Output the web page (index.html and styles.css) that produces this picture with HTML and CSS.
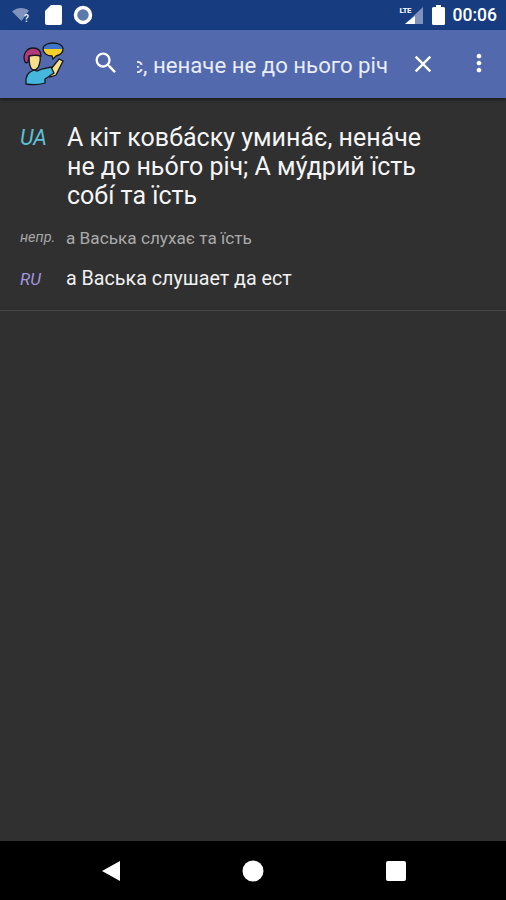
FILE: index.html
```html
<!DOCTYPE html>
<html lang="uk">
<head>
<meta charset="utf-8">
<title>Словник</title>
<link rel="stylesheet" href="styles.css">
</head>
<body>
<div class="phone">
  <div class="status">
    <div class="status-left">
      <svg class="ic-wifi" width="20" height="16" viewBox="0 0 20 16"><path d="M0 4.500C3 2 6 1 9 1s6 1 8 2.500L9.500 14z" fill="#7f93bd"/><text x="12" y="15" class="q">?</text></svg>
      <svg class="ic-sd" width="17" height="20" viewBox="0 0 17 20"><path d="M6 0h9a2 2 0 0 1 2 2v16a2 2 0 0 1-2 2H2a2 2 0 0 1-2-2V6z" fill="#fff"/></svg>
      <svg class="ic-rec" width="20" height="20" viewBox="0 0 20 20"><circle cx="10" cy="10" r="7.500" fill="#5d78ab" stroke="#fff" stroke-width="3.500"/></svg>
    </div>
    <div class="status-right">
      <span class="sig"><svg width="23" height="19" viewBox="0 0 23 19"><path d="M22 1v17H4z" fill="#7f93bd"/><path d="M14 10v8H4z" fill="#fff"/></svg><span class="lte">LTE</span></span>
      <svg class="ic-batt" width="13" height="20" viewBox="0 0 13 20"><path d="M4 0h5v2h2.500A1.500 1.500 0 0 1 13 3.500V18.500A1.500 1.500 0 0 1 11.500 20H1.500A1.500 1.500 0 0 1 0 18.500V3.500A1.500 1.500 0 0 1 1.500 2H4z" fill="#fff"/></svg>
      <span class="clock">00:06</span>
    </div>
  </div>
  <header class="appbar">
    <svg class="logo" width="46" height="48" viewBox="0 0 46 48">
      <path d="M30 29l8-10 4 2-7 14-6 2z" fill="#f6e08a" stroke="#16161c" stroke-width="1.300"/>
      <path d="M5 44c-1-7 2-12 8-14l3 1 5-2 9-2 3 6-9 6v4c-6 2-13 2-19 1z" fill="#45b6dc" stroke="#16161c" stroke-width="1.300"/>
      <path d="M8 15h11c1 6-1 15-6 15-4 0-5-8-5-15z" fill="#f6e08a" stroke="#16161c" stroke-width="1.300"/>
      <path d="M4 22C1 14 6 8 12 8c5 0 8 3 8 8-4-1-8-1-12 0l-1 6c-1 1-2 1-3 0z" fill="#b33a78" stroke="#16161c" stroke-width="1.300"/>
      <path d="M22 9c0-4 5-6 10-6s10 2 10 6H22z" fill="#3d74c8"/>
      <path d="M22 9h20c0 4-3 6-7 7l-3 3-1-3c-5 0-9-3-9-7z" fill="#f4cf2a"/>
      <path d="M22 9c0-4 5-6 10-6s10 2 10 6c0 4-3 6-7 7l-3 3-1-3c-5 0-9-3-9-7z" fill="none" stroke="#16161c" stroke-width="1.300"/>
    </svg>
    <svg class="search" width="28" height="28" viewBox="0 0 24 24"><path fill="#fff" d="M15.500 14h-.79l-.28-.27A6.470 6.470 0 0 0 16 9.500 6.500 6.500 0 1 0 9.500 16c1.610 0 3.090-.59 4.230-1.570l.27.28v.79l5 4.990L20.490 19l-4.990-5zm-6 0C7.010 14 5 11.990 5 9.500S7.010 5 9.500 5 14 7.010 14 9.500 11.990 14 9.500 14z"/></svg>
    <div class="query"><span>А кіт ковбаску уминає, неначе не до нього річ</span></div>
    <svg class="close" width="28" height="28" viewBox="0 0 24 24"><path fill="#fff" d="M19 6.410 17.590 5 12 10.590 6.410 5 5 6.410 10.590 12 5 17.590 6.410 19 12 13.410 17.590 19 19 17.590 13.410 12z"/></svg>
    <svg class="more" width="28" height="28" viewBox="0 0 24 24"><path fill="#fff" d="M12 8c1.100 0 2-.9 2-2s-.9-2-2-2-2 .9-2 2 .9 2 2 2zm0 2c-1.100 0-2 .9-2 2s.9 2 2 2 2-.9 2-2-.9-2-2-2zm0 6c-1.100 0-2 .9-2 2s.9 2 2 2 2-.9 2-2-.9-2-2-2z"/></svg>
  </header>
  <main class="content">
    <article class="entry">
      <div class="row row-main">
        <span class="tag tag-ua">UA</span>
        <p class="text-main">А кіт ковба́ску умина́є, нена́че не до ньо́го річ; А му́дрий їсть собі́ та їсть</p>
      </div>
      <div class="row row-note">
        <span class="tag tag-note">непр.</span>
        <p class="text-note">а Васька слухає та їсть</p>
      </div>
      <div class="row row-ru">
        <span class="tag tag-ru">RU</span>
        <p class="text-ru">а Васька слушает да ест</p>
      </div>
    </article>
  </main>
  <nav class="navbar">
    <svg width="18" height="20" viewBox="0 0 18 20"><path d="M18 0v20L0 10z" fill="#fff"/></svg>
    <svg width="22" height="22" viewBox="0 0 22 22"><circle cx="11" cy="11" r="10.500" fill="#fff"/></svg>
    <svg width="20" height="20" viewBox="0 0 20 20"><rect width="20" height="20" rx="2" fill="#fff"/></svg>
  </nav>
</div>
</body>
</html>
```
FILE: styles.css
```css
* { box-sizing: border-box; }
html, body { margin: 0; padding: 0; }
body { background: #303030; font-family: Roboto, "Noto Sans", sans-serif; }
p { margin: 0; }
svg { display: block; flex: none; }

.phone { width: 506px; height: 900px; display: flex; flex-direction: column; overflow: hidden; }

.status { height: 30px; flex: none; background: #183c80; display: flex; justify-content: space-between; align-items: center; padding: 0 9px 0 12px; }
.status-left { display: flex; align-items: center; gap: 11px; }
.ic-sd { margin-left: 2px; }
.q { font-size: 10px; font-weight: 700; fill: #dfe6f2; font-family: Roboto, sans-serif; }
.status-right { display: flex; align-items: center; }
.sig { position: relative; display: block; width: 23px; height: 19px; margin-right: 8px; }
.lte { position: absolute; left: -1px; top: 0; font-size: 8px; font-weight: 700; color: #fff; letter-spacing: -.5px; line-height: 10px; }
.ic-batt { margin-right: 8px; }
.clock { color: #fff; font-size: 17.500px; font-weight: 500; line-height: 20px; }

.appbar { height: 68px; flex: none; background: #5269ae; display: flex; align-items: center; padding-left: 21px; box-shadow: 0 2px 3px rgba(0,0,0,.45); position: relative; }
.search { margin-left: 25px; margin-top: -2px; }
.query { width: 251px; margin-left: 17px; margin-top: 2px; overflow: hidden; display: flex; justify-content: flex-end; white-space: nowrap; color: #e9edf7; font-size: 22.200px; line-height: 28px; }
.close { margin-left: 21px; margin-top: -1px; }
.more { margin-left: 28px; margin-top: -2px; }

.content { flex: 1; }
.entry { border-bottom: 1px solid #474747; padding: 25px 20px 18px 0; display: flex; flex-direction: column; }
.row { display: flex; padding-left: 20px; }
.tag { font-style: italic; flex: none; }
.row-main .tag { width: 47px; font-size: 21.500px; line-height: 29px; }
.tag-ua { color: #5fc0d6; }
.text-main { color: #f5f5f5; font-size: 25px; line-height: 29px; max-width: 370px; }
.row-note { margin-top: 15px; }
.tag-note { width: 46px; color: #a6a6a6; font-size: 14.500px; line-height: 26px; }
.text-note { color: #aaaaaa; font-size: 17.200px; line-height: 26px; }
.row-ru { margin-top: 15px; }
.tag-ru { width: 46px; color: #a296de; font-size: 17px; line-height: 26px; }
.text-ru { color: #f0f0f0; font-size: 19.700px; line-height: 26px; }

.navbar { height: 59px; flex: none; background: #000; display: flex; align-items: center; padding: 0 100px 0 102px; justify-content: space-between; }
```
